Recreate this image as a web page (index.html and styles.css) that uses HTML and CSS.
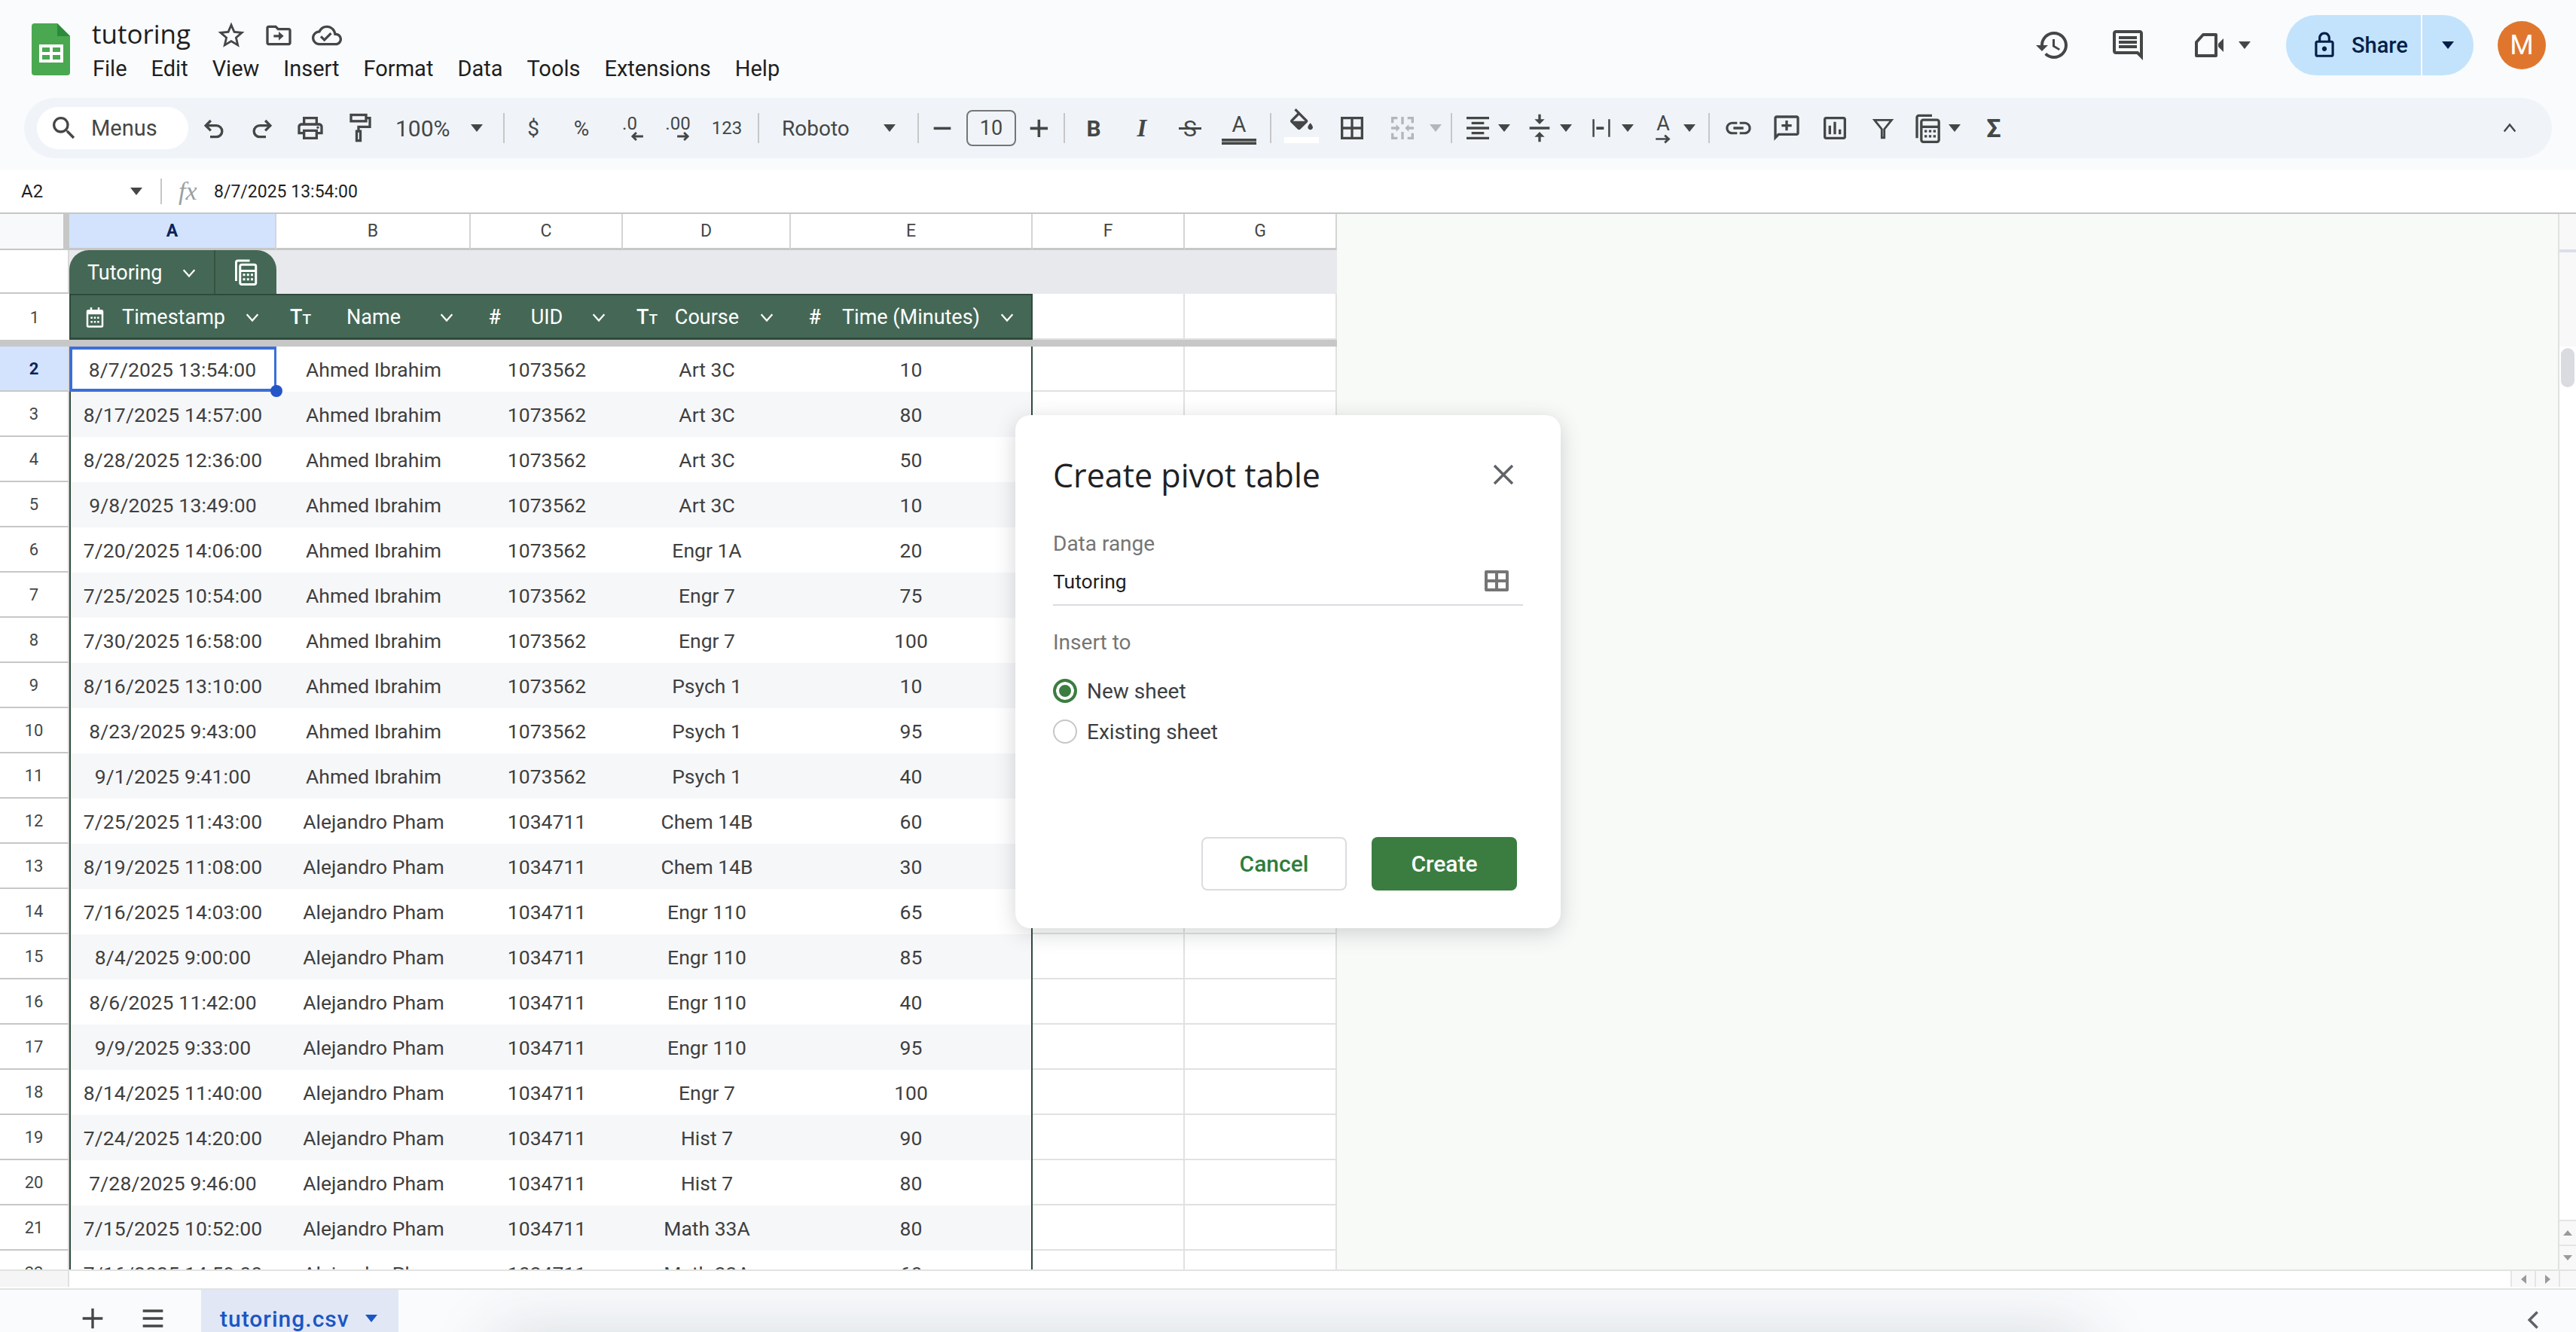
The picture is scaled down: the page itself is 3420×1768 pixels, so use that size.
FILE: index.html
```html
<!DOCTYPE html>
<html>
<head>
  <title>tutoring</title>
  <link rel="stylesheet" href="styles.css">
</head>
<body>
  <svg class="sprite" width="0" height="0">
    <symbol id="chev" viewBox="0 0 24 24"><path d="M4 8l8 9 8-9" fill="none" stroke="currentColor" stroke-width="2.4"/></symbol>
    <symbol id="calc" viewBox="0 0 24 24">
      <path d="M3 20V3.5A1.5 1.5 0 0 1 4.500 2H15" fill="none" stroke="currentColor" stroke-width="2"/>
      <rect x="6.500" y="5.500" width="14" height="17.500" rx="1.500" fill="none" stroke="currentColor" stroke-width="2"/>
      <path d="M6.500 11h14" stroke="currentColor" stroke-width="2"/>
      <path d="M9 13.500h2v2H9zm3.500 0h2v2h-2zm3.500 0h2v2h-2zM9 17.500h2v2H9zm3.500 0h2v2h-2zm3.500 0h2v2h-2z" fill="currentColor"/>
    </symbol>
  </svg>

  <div class="head">
    <div class="topbar">
      <svg class="logo" viewBox="0 0 51 69">
        <path d="M4 0H34L51 17V65a4 4 0 0 1-4 4H4a4 4 0 0 1-4-4V4a4 4 0 0 1 4-4z" fill="#4aa851"/>
        <path d="M34 0L51 17H34z" fill="#2c8a3c"/>
        <path d="M10 28h32v24H10z" fill="#fff"/>
        <path d="M14 32h10v6H14zm14 0h10v6H28zM14 42h10v6H14zm14 0h10v6H28z" fill="#4aa851"/>
      </svg>
      <div class="doc">
        <div class="doc-title">
          <span class="doc-name">tutoring</span>
          <svg class="ic-title star" viewBox="0 0 24 24"><path d="M22 9.240l-7.190-.62L12 2 9.190 8.630 2 9.240l5.460 4.730L5.820 21 12 17.270 18.180 21l-1.630-7.030L22 9.240zM12 15.400l-3.760 2.270 1-4.280-3.320-2.880 4.380-.38L12 6.100l1.710 4.040 4.380.38-3.320 2.880 1 4.280L12 15.400z"/></svg>
          <svg class="ic-title" viewBox="0 0 24 24"><path d="M20 6h-8l-2-2H4c-1.100 0-2 .9-2 2v12c0 1.100.9 2 2 2h16c1.100 0 2-.9 2-2V8c0-1.100-.9-2-2-2zm0 12H4V6h5.170l2 2H20v10zm-8-4.500H8v-2h4V9l4 3.500-4 3.500v-2.500z"/></svg>
          <svg class="ic-title" viewBox="0 0 24 24"><path d="M19.350 10.040C18.670 6.590 15.640 4 12 4 9.110 4 6.600 5.640 5.350 8.040 2.340 8.360 0 10.910 0 14c0 3.310 2.690 6 6 6h13c2.760 0 5-2.240 5-5 0-2.640-2.050-4.780-4.650-4.960zM19 18H6c-2.210 0-4-1.790-4-4 0-2.050 1.530-3.760 3.560-3.970l1.070-.11.5-.95C8.080 7.140 9.940 6 12 6c2.620 0 4.880 1.860 5.390 4.430l.3 1.500 1.530.11c1.560.1 2.780 1.410 2.780 2.960 0 1.650-1.350 3-3 3zm-9-3.820l-2.090-2.090L6.500 13.500 10 17l6.010-6.010-1.410-1.410z"/></svg>
        </div>
        <div class="menubar">
          <span>File</span><span>Edit</span><span>View</span><span>Insert</span><span>Format</span><span>Data</span><span>Tools</span><span>Extensions</span><span>Help</span>
        </div>
      </div>
      <div class="actions">
        <span class="act"><svg class="ic-act" viewBox="0 0 24 24"><path d="M13 3c-4.970 0-9 4.030-9 9H1l3.890 3.890.07.14L9 12H6c0-3.870 3.130-7 7-7s7 3.130 7 7-3.130 7-7 7c-1.930 0-3.680-.79-4.940-2.060l-1.420 1.420C8.270 19.990 10.510 21 13 21c4.970 0 9-4.030 9-9s-4.030-9-9-9zm-1 5v5l4.280 2.540.72-1.210-3.500-2.080V8H12z"/></svg></span>
        <span class="act"><svg class="ic-act" viewBox="0 0 24 24"><path d="M20 2H4c-1.100 0-2 .9-2 2v12c0 1.100.9 2 2 2h14l4 4V4c0-1.100-.9-2-2-2zm0 15.170L18.830 16H4V4h16v13.170zM6 12h12v2H6zm0-3h12v2H6zm0-3h12v2H6z"/></svg></span>
        <span class="act-video">
          <svg class="ic-act" viewBox="0 0 24 24"><path d="M8 5h8.500v14H3.500V10z" fill="none" stroke="currentColor" stroke-width="2" stroke-linejoin="round"/><path d="M18 11l3.500-3.500v9L18 13z"/></svg>
          <i class="caret"></i>
        </span>
        <div class="share">
          <span class="share-main">
            <svg class="ic-lock" viewBox="0 0 24 24"><path d="M18 8h-1V6c0-2.760-2.240-5-5-5S7 3.240 7 6v2H6c-1.100 0-2 .9-2 2v10c0 1.100.9 2 2 2h12c1.100 0 2-.9 2-2V10c0-1.100-.9-2-2-2zM9 6c0-1.660 1.340-3 3-3s3 1.340 3 3v2H9V6zm9 14H6V10h12v10zm-6-3c1.100 0 2-.9 2-2s-.9-2-2-2-2 .9-2 2 .9 2 2 2z"/></svg>
            Share
          </span>
          <span class="share-drop"><i class="caret"></i></span>
        </div>
        <span class="avatar">M</span>
      </div>
    </div>

    <div class="toolbar">
      <div class="menus">
        <svg class="ic-search" viewBox="0 0 24 24"><path d="M15.500 14h-.79l-.28-.27A6.471 6.471 0 0 0 16 9.500 6.500 6.500 0 1 0 9.500 16c1.610 0 3.090-.59 4.230-1.570l.27.28v.79l5 4.990L20.490 19l-4.990-5zm-6 0C7.010 14 5 11.990 5 9.500S7.010 5 9.500 5 14 7.010 14 9.500 11.990 14 9.500 14z"/></svg>
        Menus
      </div>
      <span class="tb"><svg class="ic" viewBox="0 0 24 24"><path d="M9.500 6L5.500 10l4 4M5.500 10H14a4.500 4.500 0 0 1 0 9H9" fill="none" stroke="currentColor" stroke-width="2"/></svg></span>
      <span class="tb"><svg class="ic" viewBox="0 0 24 24"><path d="M14.500 6l4 4-4 4M18.500 10H10a4.500 4.500 0 0 0 0 9h5" fill="none" stroke="currentColor" stroke-width="2"/></svg></span>
      <span class="tb"><svg class="ic" viewBox="0 0 24 24"><path d="M19 8h-1V3H6v5H5c-1.660 0-3 1.340-3 3v6h4v4h12v-4h4v-6c0-1.660-1.340-3-3-3zM8 5h8v3H8V5zm8 14H8v-4h8v4zm2-4v-2H6v2H4v-4c0-.55.45-1 1-1h14c.55 0 1 .45 1 1v4h-2z"/><circle cx="18" cy="11.500" r="1"/></svg></span>
      <span class="tb"><svg class="ic" viewBox="0 0 24 24"><g fill="none" stroke="currentColor" stroke-width="2"><rect x="6" y="1.500" width="12" height="5"/><path d="M18 4h3v7h-9v3"/><rect x="10.500" y="14.500" width="3" height="7.500"/></g></svg></span>
      <span class="tb-zoom">100%<i class="caret"></i></span>
      <i class="sep sep-zoom"></i>
      <span class="tb tb-txt">$</span>
      <span class="tb tb-txt">%</span>
      <span class="tb tb-dec">.0<svg class="ic-arrow ic-arrow-l" viewBox="0 0 16 12"><path d="M15 6H3M7 1.500L2.500 6 7 10.500" fill="none" stroke="currentColor" stroke-width="2.500"/></svg></span>
      <span class="tb tb-dec">.00<svg class="ic-arrow ic-arrow-r" viewBox="0 0 16 12"><path d="M1 6h12M9 1.500L13.500 6 9 10.500" fill="none" stroke="currentColor" stroke-width="2.500"/></svg></span>
      <span class="tb tb-123">123</span>
      <i class="sep sep-num"></i>
      <span class="tb-font">Roboto<i class="caret"></i></span>
      <i class="sep sep-font"></i>
      <span class="tb-minus"><svg class="ic-sm" viewBox="0 0 24 24"><path d="M4 11h16v2.500H4z"/></svg></span>
      <span class="fontsize">10</span>
      <span class="tb-plus"><svg class="ic-sm" viewBox="0 0 24 24"><path d="M4 11h7V4h2.500v7h7v2.500h-7v7H11v-7H4z"/></svg></span>
      <i class="sep sep-size"></i>
      <span class="tb fmt-b">B</span>
      <span class="tb fmt-i">I</span>
      <span class="tb fmt-s">S</span>
      <span class="tb-color"><span class="fmt-a">A</span><i class="color-bar"></i></span>
      <i class="sep sep-color"></i>
      <span class="tb tb-fill">
        <svg class="ic" viewBox="0 0 24 24"><path d="M16.560 8.940L7.620 0 6.210 1.410l2.380 2.380-5.150 5.150c-.59.59-.59 1.540 0 2.120l5.500 5.500c.29.29.68.44 1.060.44s.77-.15 1.060-.44l5.500-5.500c.59-.58.59-1.530 0-2.120zM5.210 10L10 5.210 14.790 10H5.210zM19 11.500s-2 2.170-2 3.500c0 1.100.9 2 2 2s2-.9 2-2c0-1.330-2-3.500-2-3.500z"/></svg>
        <i class="fill-bar"></i>
      </span>
      <span class="tb tb-borders"><svg class="ic" viewBox="0 0 24 24"><path d="M3 3v18h18V3H3zm8 16H5v-6h6v6zm0-8H5V5h6v6zm8 8h-6v-6h6v6zm0-8h-6V5h6v6z"/></svg></span>
      <span class="tb-merge"><svg class="ic off" viewBox="0 0 24 24"><path d="M3 3h5v2H5v3H3zm13 0h5v5h-2V5h-3zM3 16h2v3h3v2H3zm16 0h2v5h-5v-2h3zM3 11h4V9l3 3-3 3v-2H3zm18 0h-4V9l-3 3 3 3v-2h4zM11 3h2v6h-2zm0 12h2v6h-2z"/></svg></span>
      <i class="caret off-caret"></i>
      <i class="sep sep-merge"></i>
      <span class="tb-drop"><svg class="ic" viewBox="0 0 24 24"><path d="M7 15v2h10v-2H7zm-4 6h18v-2H3v2zm0-8h18v-2H3v2zm4-6v2h10V7H7zM3 3v2h18V3H3z"/></svg><i class="caret"></i></span>
      <span class="tb-drop"><svg class="ic" viewBox="0 0 24 24"><path d="M8 19h3v4h2v-4h3l-4-4-4 4zm8-14h-3V1h-2v4H8l4 4 4-4zM4 11v2h16v-2H4z"/></svg><i class="caret"></i></span>
      <span class="tb-drop"><svg class="ic" viewBox="0 0 24 24"><path d="M5 5h1.500v14H5zm12.500 0H19v14h-1.500zM8 11h6v2.200H8z"/></svg><i class="caret"></i></span>
      <span class="tb-drop"><span class="rot"><span class="rot-a">A</span><svg class="ic-rot" viewBox="0 0 20 12"><path d="M1 6h15M12 1.500L17 6l-5 4.500" fill="none" stroke="currentColor" stroke-width="2.500"/></svg></span><i class="caret"></i></span>
      <i class="sep sep-rot"></i>
      <span class="tb"><svg class="ic" viewBox="0 0 24 24"><path d="M3.900 12c0-1.710 1.390-3.100 3.100-3.100h4V7H7c-2.760 0-5 2.240-5 5s2.240 5 5 5h4v-1.900H7c-1.710 0-3.100-1.390-3.100-3.100zM8 13h8v-2H8v2zm9-6h-4v1.900h4c1.710 0 3.100 1.390 3.100 3.100s-1.390 3.100-3.100 3.100h-4V17h4c2.760 0 5-2.240 5-5s-2.240-5-5-5z"/></svg></span>
      <span class="tb"><svg class="ic" viewBox="0 0 24 24"><path d="M20 2H4c-1.100 0-2 .9-2 2v18l4-4h14c1.100 0 2-.9 2-2V4c0-1.100-.9-2-2-2zm0 14H5.170L4 17.170V4h16v12zM11 14h2v-3h3V9h-3V6h-2v3H8v2h3z"/></svg></span>
      <span class="tb"><svg class="ic" viewBox="0 0 24 24"><path d="M19 3H5c-1.100 0-2 .9-2 2v14c0 1.100.9 2 2 2h14c1.100 0 2-.9 2-2V5c0-1.100-.9-2-2-2zm0 16H5V5h14v14zM7 10h2v7H7zm4-3h2v10h-2zm4 6h2v4h-2z"/></svg></span>
      <span class="tb"><svg class="ic-filter" viewBox="0 0 24 24"><path d="M4 4.500h16l-6.800 8.500v8h-2.400v-8z" fill="none" stroke="currentColor" stroke-width="2"/></svg></span>
      <span class="tb-calc"><svg class="ic"><use href="#calc"/></svg><i class="caret"></i></span>
      <span class="tb tb-sigma">&Sigma;</span>
      <span class="tb tb-collapse"><svg class="ic-chev-up" viewBox="0 0 24 24"><path d="M4 17l8-10 8 10" fill="none" stroke="currentColor" stroke-width="2.600"/></svg></span>
    </div>
  </div>

  <div class="formula">
    <span class="namebox">A2<i class="caret"></i></span>
    <i class="sep sep-name"></i>
    <span class="fx">fx</span>
    <span class="fvalue">8/7/2025 13:54:00</span>
  </div>

  <div class="sheet">
    <div class="grid">
      <div class="row colhead">
        <div class="corner"></div>
        <div class="ch ch-on">A</div><div class="ch">B</div><div class="ch">C</div><div class="ch">D</div><div class="ch">E</div><div class="ch">F</div><div class="ch">G</div>
      </div>
      <div class="row tabrow">
        <div class="rh"></div>
        <div class="tabstrip">
          <div class="tabletab">
            <span class="tab-name">Tutoring<svg class="chev"><use href="#chev"/></svg></span>
            <span class="tab-calc"><svg class="ic-calc"><use href="#calc"/></svg></span>
          </div>
        </div>
      </div>
      <div class="row headrow">
        <div class="rh rh-head">1</div>
        <div class="th th-first"><svg class="th-ic" viewBox="0 0 24 24"><path d="M7 1.500h2V4h6V1.500h2V4h2a2 2 0 0 1 2 2v15a2 2 0 0 1-2 2H5a2 2 0 0 1-2-2V6a2 2 0 0 1 2-2h2zM5 9v12h14V9zm2.500 2.500h2v2h-2zm3.500 0h2v2h-2zm3.500 0h2v2h-2zM7.500 16h2v2h-2zm3.500 0h2v2h-2zm3.500 0h2v2h-2z"/></svg><span>Timestamp</span><svg class="chev"><use href="#chev"/></svg></div>
        <div class="th"><span class="th-type">T<small>T</small></span><span>Name</span><svg class="chev"><use href="#chev"/></svg></div>
        <div class="th"><span class="th-type">#</span><span>UID</span><svg class="chev"><use href="#chev"/></svg></div>
        <div class="th"><span class="th-type">T<small>T</small></span><span>Course</span><svg class="chev"><use href="#chev"/></svg></div>
        <div class="th th-last"><span class="th-type">#</span><span>Time (Minutes)</span><svg class="chev"><use href="#chev"/></svg></div>
        <div class="gc"></div><div class="gc"></div>
      </div>
      <div class="freeze"></div>

      <div class="row"><div class="rh rh-on">2</div><div class="c c-first c-sel">8/7/2025 13:54:00</div><div class="c">Ahmed Ibrahim</div><div class="c">1073562</div><div class="c">Art 3C</div><div class="c c-last">10</div><div class="gc"></div><div class="gc"></div></div>
      <div class="row alt"><div class="rh">3</div><div class="c c-first">8/17/2025 14:57:00</div><div class="c">Ahmed Ibrahim</div><div class="c">1073562</div><div class="c">Art 3C</div><div class="c c-last">80</div><div class="gc"></div><div class="gc"></div></div>
      <div class="row"><div class="rh">4</div><div class="c c-first">8/28/2025 12:36:00</div><div class="c">Ahmed Ibrahim</div><div class="c">1073562</div><div class="c">Art 3C</div><div class="c c-last">50</div><div class="gc"></div><div class="gc"></div></div>
      <div class="row alt"><div class="rh">5</div><div class="c c-first">9/8/2025 13:49:00</div><div class="c">Ahmed Ibrahim</div><div class="c">1073562</div><div class="c">Art 3C</div><div class="c c-last">10</div><div class="gc"></div><div class="gc"></div></div>
      <div class="row"><div class="rh">6</div><div class="c c-first">7/20/2025 14:06:00</div><div class="c">Ahmed Ibrahim</div><div class="c">1073562</div><div class="c">Engr 1A</div><div class="c c-last">20</div><div class="gc"></div><div class="gc"></div></div>
      <div class="row alt"><div class="rh">7</div><div class="c c-first">7/25/2025 10:54:00</div><div class="c">Ahmed Ibrahim</div><div class="c">1073562</div><div class="c">Engr 7</div><div class="c c-last">75</div><div class="gc"></div><div class="gc"></div></div>
      <div class="row"><div class="rh">8</div><div class="c c-first">7/30/2025 16:58:00</div><div class="c">Ahmed Ibrahim</div><div class="c">1073562</div><div class="c">Engr 7</div><div class="c c-last">100</div><div class="gc"></div><div class="gc"></div></div>
      <div class="row alt"><div class="rh">9</div><div class="c c-first">8/16/2025 13:10:00</div><div class="c">Ahmed Ibrahim</div><div class="c">1073562</div><div class="c">Psych 1</div><div class="c c-last">10</div><div class="gc"></div><div class="gc"></div></div>
      <div class="row"><div class="rh">10</div><div class="c c-first">8/23/2025 9:43:00</div><div class="c">Ahmed Ibrahim</div><div class="c">1073562</div><div class="c">Psych 1</div><div class="c c-last">95</div><div class="gc"></div><div class="gc"></div></div>
      <div class="row alt"><div class="rh">11</div><div class="c c-first">9/1/2025 9:41:00</div><div class="c">Ahmed Ibrahim</div><div class="c">1073562</div><div class="c">Psych 1</div><div class="c c-last">40</div><div class="gc"></div><div class="gc"></div></div>
      <div class="row"><div class="rh">12</div><div class="c c-first">7/25/2025 11:43:00</div><div class="c">Alejandro Pham</div><div class="c">1034711</div><div class="c">Chem 14B</div><div class="c c-last">60</div><div class="gc"></div><div class="gc"></div></div>
      <div class="row alt"><div class="rh">13</div><div class="c c-first">8/19/2025 11:08:00</div><div class="c">Alejandro Pham</div><div class="c">1034711</div><div class="c">Chem 14B</div><div class="c c-last">30</div><div class="gc"></div><div class="gc"></div></div>
      <div class="row"><div class="rh">14</div><div class="c c-first">7/16/2025 14:03:00</div><div class="c">Alejandro Pham</div><div class="c">1034711</div><div class="c">Engr 110</div><div class="c c-last">65</div><div class="gc"></div><div class="gc"></div></div>
      <div class="row alt"><div class="rh">15</div><div class="c c-first">8/4/2025 9:00:00</div><div class="c">Alejandro Pham</div><div class="c">1034711</div><div class="c">Engr 110</div><div class="c c-last">85</div><div class="gc"></div><div class="gc"></div></div>
      <div class="row"><div class="rh">16</div><div class="c c-first">8/6/2025 11:42:00</div><div class="c">Alejandro Pham</div><div class="c">1034711</div><div class="c">Engr 110</div><div class="c c-last">40</div><div class="gc"></div><div class="gc"></div></div>
      <div class="row alt"><div class="rh">17</div><div class="c c-first">9/9/2025 9:33:00</div><div class="c">Alejandro Pham</div><div class="c">1034711</div><div class="c">Engr 110</div><div class="c c-last">95</div><div class="gc"></div><div class="gc"></div></div>
      <div class="row"><div class="rh">18</div><div class="c c-first">8/14/2025 11:40:00</div><div class="c">Alejandro Pham</div><div class="c">1034711</div><div class="c">Engr 7</div><div class="c c-last">100</div><div class="gc"></div><div class="gc"></div></div>
      <div class="row alt"><div class="rh">19</div><div class="c c-first">7/24/2025 14:20:00</div><div class="c">Alejandro Pham</div><div class="c">1034711</div><div class="c">Hist 7</div><div class="c c-last">90</div><div class="gc"></div><div class="gc"></div></div>
      <div class="row"><div class="rh">20</div><div class="c c-first">7/28/2025 9:46:00</div><div class="c">Alejandro Pham</div><div class="c">1034711</div><div class="c">Hist 7</div><div class="c c-last">80</div><div class="gc"></div><div class="gc"></div></div>
      <div class="row alt"><div class="rh">21</div><div class="c c-first">7/15/2025 10:52:00</div><div class="c">Alejandro Pham</div><div class="c">1034711</div><div class="c">Math 33A</div><div class="c c-last">80</div><div class="gc"></div><div class="gc"></div></div>
      <div class="row"><div class="rh">22</div><div class="c c-first">7/16/2025 14:59:00</div><div class="c">Alejandro Pham</div><div class="c">1034711</div><div class="c">Math 33A</div><div class="c c-last">60</div><div class="gc"></div><div class="gc"></div></div>
    </div>
    <div class="canvas"></div>
    <div class="vscroll">
      <div class="vs-frozen"></div>
      <div class="vs-track"><div class="vs-thumb"></div></div>
      <div class="vs-btn"><i class="tri tri-up"></i></div>
      <div class="vs-btn"><i class="tri tri-down"></i></div>
    </div>
  </div>

  <div class="hscroll">
    <div class="hs-left"></div>
    <div class="hs-track"></div>
    <div class="hs-btn"><i class="tri tri-left"></i></div>
    <div class="hs-btn"><i class="tri tri-right"></i></div>
    <div class="hs-corner"></div>
  </div>

  <div class="tabsbar">
    <span class="sb-btn"><svg class="ic" viewBox="0 0 24 24"><path d="M4 11h7V4h2v7h7v2h-7v7h-2v-7H4z"/></svg></span>
    <span class="sb-btn"><svg class="ic" viewBox="0 0 24 24"><path d="M4 5h16v2H4zm0 6h16v2H4zm0 6h16v2H4z"/></svg></span>
    <span class="sheet-tab">tutoring.csv<i class="caret"></i></span>
    <svg class="ic-side" viewBox="0 0 24 24"><path d="M16 3L7 12l9 9" fill="none" stroke="currentColor" stroke-width="3"/></svg>
  </div>

  <div class="dialog">
    <div class="dlg-head">
      <span class="dlg-title">Create pivot table</span>
      <svg class="dlg-close" viewBox="0 0 28 28"><path d="M2 2l24 24M26 2L2 26" fill="none" stroke="currentColor" stroke-width="3.500"/></svg>
    </div>
    <div class="dlg-label">Data range</div>
    <div class="dlg-input">
      <span>Tutoring</span>
      <svg class="dlg-grid" viewBox="0 0 32 28"><path d="M2 0h28a2 2 0 0 1 2 2v24a2 2 0 0 1-2 2H2a2 2 0 0 1-2-2V2a2 2 0 0 1 2-2zm2 4v8h10V4zm14 0v8h10V4zM4 16v8h10v-8zm14 0v8h10v-8z" fill-rule="evenodd"/></svg>
    </div>
    <div class="dlg-label dlg-insert">Insert to</div>
    <div class="dlg-radio"><i class="radio radio-on"></i>New sheet</div>
    <div class="dlg-radio"><i class="radio"></i>Existing sheet</div>
    <div class="dlg-actions">
      <span class="btn btn-cancel">Cancel</span>
      <span class="btn btn-create">Create</span>
    </div>
  </div>
</body>
</html>
```

FILE: styles.css
```css
* { box-sizing: border-box; }
html, body { margin: 0; padding: 0; }
body {
  position: relative;
  width: 3420px;
  height: 1768px;
  overflow: hidden;
  display: flex;
  flex-direction: column;
  background: #fff;
  font-family: Roboto, sans-serif;
  color: #444746;
}
i { display: block; font-style: normal; }
.sprite { position: absolute; }

/* header */
.head { height: 226px; flex: none; background: #f9fbfd; }
.topbar { height: 130px; display: flex; align-items: flex-start; padding: 20px 40px 0 42px; }
.logo { width: 51px; height: 69px; margin-top: 11px; flex: none; }
.doc { margin-left: 29px; }
.doc-title { height: 54px; display: flex; align-items: center; }
.doc-name { font-family: "Open Sans", sans-serif; font-size: 35px; line-height: 50px; margin-top: -4px; color: #1f1f1f; width: 164px; }
.ic-title { width: 40px; height: 40px; fill: #444746; margin-right: 24px; flex: none; }
.star { width: 42px; height: 42px; margin-right: 22px; }
.menubar { height: 36px; display: flex; gap: 32px; font-size: 29px; line-height: 35px; color: #1f1f1f; padding-left: 1px; }

.actions { margin-left: auto; height: 80px; display: flex; align-items: center; color: #444746; }
.act { width: 100px; display: flex; justify-content: center; }
.ic-act { width: 48px; height: 48px; fill: #444746; flex: none; }
.act-video { width: 116px; padding-left: 34px; display: flex; align-items: center; gap: 15px; }
.caret { width: 0; height: 0; flex: none; border-left: 8px solid transparent; border-right: 8px solid transparent; border-top: 10px solid #444746; }
.share { width: 249px; height: 80px; margin-left: 44px; display: flex; background: #c2e3fb; border-radius: 40px; color: #041e49; font-size: 29px; font-weight: 500; }
.share-main { width: 181px; display: flex; align-items: center; padding-left: 32px; gap: 17px; border-right: 2px solid #fff; }
.ic-lock { width: 38px; height: 38px; fill: #041e49; flex: none; }
.share-drop { flex: 1; display: flex; align-items: center; justify-content: center; }
.share-drop .caret { border-top-color: #041e49; }
.avatar { width: 64px; height: 64px; margin-left: 32px; border-radius: 50%; background: #e0762d; color: #fff; font-size: 36px; display: flex; align-items: center; justify-content: center; }

/* toolbar */
.toolbar { height: 80px; margin: 0 32px; padding: 0 0 0 17px; background: #f0f4f9; border-radius: 40px; display: flex; align-items: center; font-size: 29px; }
.menus { width: 201px; height: 56px; margin-right: 2px; background: #fff; border-radius: 28px; display: flex; align-items: center; padding-left: 16px; gap: 16px; font-size: 29px; }
.ic-search { width: 40px; height: 40px; fill: #444746; flex: none; }
.tb { width: 64px; height: 60px; flex: none; display: flex; align-items: center; justify-content: center; position: relative; }
.ic { width: 40px; height: 40px; fill: #444746; color: #444746; flex: none; display: block; }
.ic-sm { width: 34px; height: 34px; fill: #444746; display: block; }
.ic-filter { width: 34px; height: 34px; color: #444746; }
.sep { width: 2px; height: 40px; background: #c7c7c7; flex: none; }
.tb-zoom { width: 157px; padding-left: 17px; display: flex; align-items: center; flex: none; font-size: 30px; }
.tb-zoom .caret { margin-left: 27px; }
.sep-zoom { margin: 0 6px 0 3px; }
.tb-txt { font-size: 28px; }
.tb-dec { flex-direction: column; font-size: 24px; line-height: 24px; }
.ic-arrow { width: 18px; height: 14px; display: block; margin-top: -2px; }
.ic-arrow-l { margin-left: 20px; }
.ic-arrow-r { margin-left: 14px; }
.tb-123 { width: 66px; font-size: 24px; }
.sep-num { margin: 0 0 0 8px; }
.tb-font { width: 202px; padding: 0 21px 0 30px; display: flex; align-items: center; justify-content: space-between; flex: none; font-size: 28px; }
.sep-font { margin: 0 8px; }
.tb-minus { width: 46px; display: flex; justify-content: center; flex: none; }
.fontsize { width: 66px; height: 48px; margin-left: 9px; border: 2px solid #747775; border-radius: 8px; display: flex; align-items: center; justify-content: center; flex: none; font-size: 27px; }
.tb-plus { width: 60px; display: flex; justify-content: center; flex: none; }
.sep-size { margin: 0 6px 0 3px; }
.fmt-b { font-weight: 700; font-size: 30px; }
.fmt-i { font-family: "Liberation Serif", serif; font-weight: 700; font-style: italic; font-size: 33px; }
.fmt-s { font-size: 30px; }
.fmt-s::after { content: ""; position: absolute; left: 17px; right: 17px; top: 29px; height: 3px; background: #444746; }
.tb-color { width: 66px; display: flex; flex-direction: column; align-items: center; flex: none; }
.fmt-a { font-size: 29px; line-height: 32px; }
.color-bar { width: 46px; height: 8px; margin-top: 3px; border-top: 3px solid #444746; border-bottom: 3px solid #444746; background: #8a8c8c; }
.sep-color { margin: 0 8px; }
.tb-fill .ic { margin-top: -12px; }
.fill-bar { position: absolute; left: 9px; bottom: 10px; width: 46px; height: 8px; background: #fff; }
.tb-borders { margin-left: 3px; }
.tb-merge { width: 66px; display: flex; justify-content: center; flex: none; margin-left: 2px; }
.ic.off { fill: #b4b7b9; }
.off-caret { margin-left: 3px; border-top-color: #b4b7b9; }
.sep-merge { margin: 0 14px 0 12px; }
.tb-drop { width: 82px; display: flex; align-items: center; gap: 7px; flex: none; }
.rot { width: 40px; display: flex; flex-direction: column; align-items: center; }
.rot-a { font-size: 27px; line-height: 28px; }
.ic-rot { width: 24px; height: 13px; display: block; fill: none; }
.sep-rot { margin: 0 6px 0 -2px; }
.tb-calc { width: 83px; padding-left: 8px; display: flex; align-items: center; gap: 7px; flex: none; }
.tb-sigma { font-size: 34px; font-weight: 700; }
.tb-collapse { margin-left: auto; margin-right: 24px; }
.ic-chev-up { width: 22px; height: 22px; }

/* formula bar */
.formula { height: 56px; flex: none; background: #fff; display: flex; align-items: center; padding-left: 28px; font-size: 23px; color: #1f1f1f; }
.namebox { width: 167px; display: flex; align-items: center; justify-content: space-between; padding-right: 6px; font-size: 24px; }
.sep-name { height: 34px; margin-left: 18px; }
.fx { width: 69px; padding-left: 22px; font-family: "Liberation Serif", serif; font-style: italic; font-size: 34px; color: #9aa0a0; }
.fvalue { font-size: 23px; }

/* grid */
.sheet { height: 1403px; flex: none; display: flex; border-top: 2px solid #c4c7c5; overflow: hidden; }
.grid { width: 1775px; flex: none; }
.row { display: grid; grid-template-columns: 92px 275px 258px 202px 223px 321px 202px 202px; height: 60px; font-size: 26.500px; color: #3f3f3f; }
.row.alt .c { background: #f6f7f9; }
.colhead { height: 48px; }
.corner { background: #f8f9fa; border-right: 8px solid #c7c7c7; border-bottom: 2px solid #c7c7c7; }
.ch { display: flex; align-items: center; justify-content: center; border-right: 2px solid #d3d5d5; border-bottom: 3px solid #c7c7c7; font-size: 23px; color: #444746; background: #fff; }
.ch-on { background: #d3e3fd; color: #0b2559; font-weight: 700; }
.rh { display: flex; align-items: center; justify-content: center; background: #fff; border-bottom: 2px solid #c7c7c7; border-right: 2px solid #d8d8d8; font-size: 22px; color: #444746; }
.rh-on { background: #d3e3fd; color: #0b2559; font-weight: 700; }
.tabrow { height: 58px; }
.tabstrip { grid-column: 2 / -1; background: #e8e9ed; }
.tabletab { width: 275px; height: 58px; background: #456856; border-radius: 26px 26px 0 0; display: flex; color: #fff; font-size: 27px; }
.tab-name { width: 194px; padding: 2px 0 0 24px; display: flex; align-items: center; gap: 24px; border-right: 2px solid #36533f; }
.tab-calc { flex: 1; display: flex; align-items: center; justify-content: center; }
.ic-calc { width: 36px; height: 36px; color: #fff; }
.chev { width: 22px; height: 22px; flex: none; color: #fff; display: block; }
.headrow { height: 61px; }
.rh-head { border-right: 0; border-bottom: 0; padding-top: 2px; }
.th { display: grid; grid-template-columns: 64px 1fr 64px; align-items: center; justify-items: center; background: #456856; color: #fff; border-top: 2px solid #2f4a3d; border-bottom: 3px solid #2f4a3d; padding-top: 2px; font-size: 27px; white-space: nowrap; }
.th-first { border-left: 2px solid #2f4a3d; }
.th-last { border-right: 2px solid #2f4a3d; }
.th-ic { width: 30px; height: 30px; fill: #fff; }
.th-type { font-size: 27px; font-weight: 500; }
.th-type small { font-size: 19px; }
.freeze { height: 9px; background: #c7c7c7; }
.c { display: flex; align-items: center; justify-content: center; background: #fff; white-space: nowrap; position: relative; }
.c-first { border-left: 2px solid #2f4a3d; letter-spacing: .15px; padding-right: 2px; }
.c-last { border-right: 2px solid #2f4a3d; }
.c-sel { border: 4px solid #3a6fd8; border-right-width: 3px; }
.c-sel::after { content: ""; position: absolute; right: -11px; bottom: -11px; width: 16px; height: 16px; border-radius: 50%; background: #2456c8; z-index: 2; }
.gc { background: #fff; border-right: 2px solid #e1e1e1; border-bottom: 2px solid #e1e1e1; }
.canvas { flex: 1; background: #f8faf8; }
.vscroll { width: 24px; flex: none; border-left: 2px solid #e1e1e1; display: flex; flex-direction: column; background: #fff; }
.vs-frozen { height: 176px; background: linear-gradient(#f8f8f8 47px, #dcdfe8 47px, #dcdfe8 51px, #f8f8f8 51px); }
.vs-track { flex: 1; padding: 2px 2px 0; }
.vs-thumb { width: 18px; height: 52px; border-radius: 9px; background: #d9dbe0; }
.vs-btn { height: 33px; background: #f8f8f8; border-top: 2px solid #e4e4e4; display: flex; align-items: center; justify-content: center; }
.tri { width: 0; height: 0; }
.tri-up { border-left: 6px solid transparent; border-right: 6px solid transparent; border-bottom: 7px solid #9a9a9a; }
.tri-down { border-left: 6px solid transparent; border-right: 6px solid transparent; border-top: 7px solid #9a9a9a; }
.tri-left { border-top: 6px solid transparent; border-bottom: 6px solid transparent; border-right: 7px solid #9a9a9a; }
.tri-right { border-top: 6px solid transparent; border-bottom: 6px solid transparent; border-left: 7px solid #9a9a9a; }

.hscroll { height: 27px; flex: none; display: flex; border-top: 2px solid #e1e3e1; border-bottom: 2px solid #e1e3e1; background: #fff; }
.hs-left { width: 92px; height: 21px; background: #f5f5f5; border-right: 2px solid #e1e1e1; }
.hs-track { flex: 1; }
.hs-btn { width: 32px; height: 21px; background: #f8f8f8; border-left: 2px solid #e4e4e4; display: flex; align-items: center; justify-content: center; }
.hs-corner { width: 23px; height: 21px; background: #f8f8f8; border-left: 2px solid #e4e4e4; }

/* sheet tabs */
.tabsbar { flex: 1; display: flex; align-items: flex-start; background: #f9fbfd; padding: 18px 0 0 83px; position: relative; overflow: hidden; }
.tabsbar::after { content: ""; position: absolute; left: 660px; top: 66px; width: 2110px; height: 60px; box-shadow: 0 0 90px rgba(50, 54, 57, .22); }
.sb-btn { width: 80px; display: flex; justify-content: center; }
.sheet-tab { width: 262px; height: 56px; margin: -18px 0 0 24px; padding: 20px 0 0 25px; background: #e1e7f5; display: flex; align-items: center; gap: 21px; color: #1a56c4; font-size: 30px; font-weight: 500; letter-spacing: 1px; }
.sheet-tab .caret { border-top-color: #1a56c4; }
.ic-side { width: 28px; height: 28px; margin-top: 8px; color: #5f6368; margin-left: auto; margin-right: 42px; }

/* dialog */
.dialog { position: absolute; left: 1348px; top: 551px; width: 724px; height: 681px; padding: 0 50px; background: #fff; border-radius: 20px; box-shadow: 0 6px 28px rgba(60, 64, 67, .22); display: flex; flex-direction: column; }
.dlg-head { height: 158px; display: flex; align-items: center; justify-content: space-between; margin-right: 10px; }
.dlg-title { font-family: "Open Sans", sans-serif; font-size: 43px; color: #202124; }
.dlg-close { width: 28px; height: 28px; color: #5f6368; margin-right: 2px; }
.dlg-label { font-size: 28px; line-height: 36px; color: #757575; margin-top: -5px; }
.dlg-input { height: 64px; display: flex; align-items: center; justify-content: space-between; padding-right: 19px; border-bottom: 2px solid #dadce0; font-size: 26.500px; color: #1f1f1f; margin-bottom: 36px; }
.dlg-grid { width: 32px; height: 28px; fill: #757575; }
.dlg-insert { margin-bottom: 19px; }
.dlg-radio { height: 54px; display: flex; align-items: center; gap: 13px; font-size: 28px; color: #3c4043; }
.radio { width: 32px; height: 32px; border-radius: 50%; border: 2px solid #c4c7c5; }
.radio-on { border: 4px solid #3b7d40; box-shadow: inset 0 0 0 4px #fff; background: #3b7d40; }
.dlg-actions { margin-top: auto; margin-bottom: 50px; margin-right: 8px; display: flex; justify-content: flex-end; gap: 33px; }
.btn { width: 193px; height: 71px; border-radius: 8px; display: flex; align-items: center; justify-content: center; font-size: 30px; font-weight: 500; }
.btn-cancel { border: 2px solid #dadce0; color: #2f7d3b; background: #fff; }
.btn-create { background: #3b7d40; color: #fff; }
```
